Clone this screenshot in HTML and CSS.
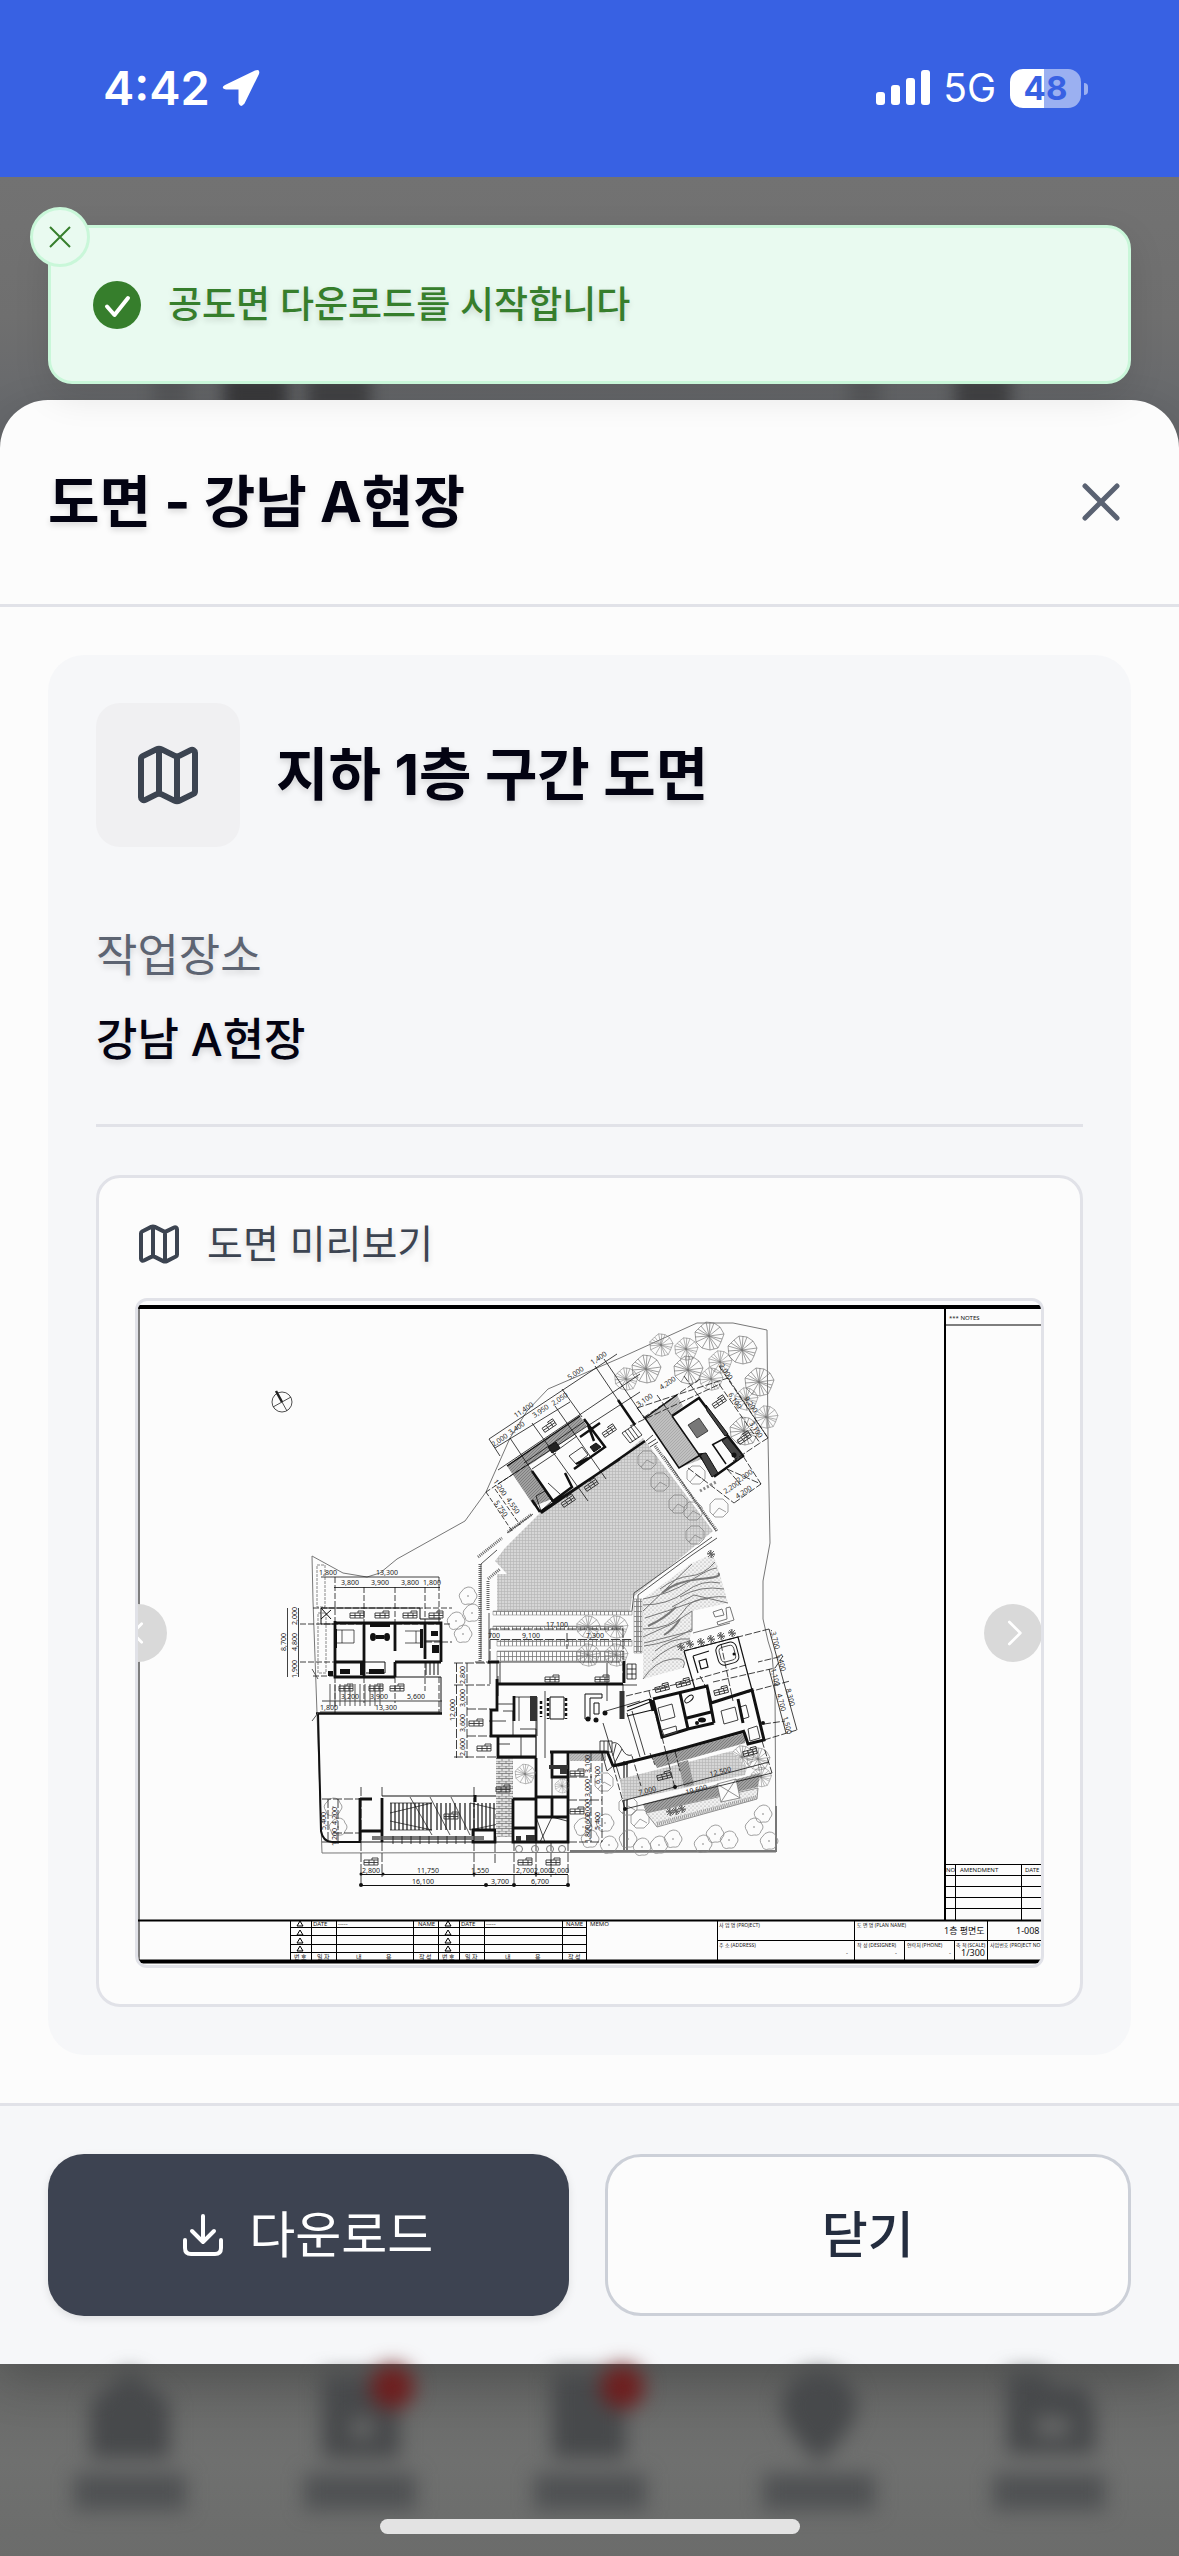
FILE: index.html
```html
<!DOCTYPE html>
<html lang="ko">
<head>
<meta charset="utf-8">
<meta name="viewport" content="width=device-width, initial-scale=1">
<title>도면 - 강남 A현장</title>
<link rel="stylesheet" href="styles.css">
</head>
<body>
<header class="status">
  <div class="status-group">
    <span class="clock">4:42</span>
    <svg class="location" viewBox="0 0 38 38" aria-hidden="true"><path d="M3 16 33 1.500Q38.500-.500 37 5L22.500 34.500Q18.500 39.500 16.500 34V20.500H4Q-2 19 3 16Z" fill="#fff"/></svg>
  </div>
  <div class="status-group">
    <svg class="signal" viewBox="0 0 54 36" fill="#fff" aria-hidden="true"><rect y="22" width="9" height="13" rx="3"/><rect x="15" y="15" width="9" height="20" rx="3"/><rect x="30" y="8" width="9" height="27" rx="3"/><rect x="45" width="9" height="35" rx="3"/></svg>
    <span class="network">5G</span>
    <span class="battery">48</span>
  </div>
</header>

<main class="stage">
  <div class="page-shade" aria-hidden="true"><i class="s1"></i><i class="s2"></i><i class="s3"></i><i class="s4"></i><i class="s5"></i></div>

  <div class="toast" role="status">
    <button class="toast-close" aria-label="알림 닫기"><svg viewBox="0 0 24 24"><path d="M2 2 22 22M22 2 2 22"/></svg></button>
    <svg class="toast-icon" viewBox="0 0 48 48" aria-hidden="true"><circle cx="24" cy="24" r="24" fill="#367e2c"/><path d="M14 25.500 21.500 34 35 17" fill="none" stroke="#fff" stroke-width="4" stroke-linecap="round" stroke-linejoin="round"/></svg>
    <span>공도면 다운로드를 시작합니다</span>
  </div>

  <section class="sheet" role="dialog" aria-labelledby="sheet-title">
    <header class="sheet-head">
      <h1 id="sheet-title">도면 - 강남 A현장</h1>
      <button class="sheet-close" aria-label="닫기"><svg viewBox="0 0 60 60"><path d="M14 14 46 46M46 14 14 46"/></svg></button>
    </header>

    <div class="sheet-body">
      <article class="card">
        <div class="card-head">
          <span class="card-icon"><svg class="map" viewBox="0 0 24 24" aria-hidden="true"><path d="M14.106 5.553a2 2 0 0 0 1.788 0l3.659-1.830A1 1 0 0 1 21 4.619v12.764a1 1 0 0 1-.553.894l-4.553 2.277a2 2 0 0 1-1.788 0l-4.212-2.106a2 2 0 0 0-1.788 0l-3.659 1.830A1 1 0 0 1 3 19.381V6.618a1 1 0 0 1 .553-.894l4.553-2.277a2 2 0 0 1 1.788 0zM15 5.764v15M9 3.236v15"/></svg></span>
          <h2>지하 1층 구간 도면</h2>
        </div>
        <dl class="info">
          <dt>작업장소</dt>
          <dd>강남 A현장</dd>
        </dl>

        <section class="preview">
          <h3><svg class="map map-small" viewBox="0 0 24 24" aria-hidden="true"><path d="M14.106 5.553a2 2 0 0 0 1.788 0l3.659-1.830A1 1 0 0 1 21 4.619v12.764a1 1 0 0 1-.553.894l-4.553 2.277a2 2 0 0 1-1.788 0l-4.212-2.106a2 2 0 0 0-1.788 0l-3.659 1.830A1 1 0 0 1 3 19.381V6.618a1 1 0 0 1 .553-.894l4.553-2.277a2 2 0 0 1 1.788 0zM15 5.764v15M9 3.236v15"/></svg>도면 미리보기</h3>
          <div class="frame">
            <svg class="plan" viewBox="138 1300 903 664" role="img" aria-label="1층 평면도">
              <defs>
                <pattern id="grid" width="3" height="3" patternUnits="userSpaceOnUse"><rect width="3" height="3" fill="#d6d6d6"/><path d="M0 .5H3M.5 0V3" stroke="#b4b4b4" stroke-width=".6"/></pattern>
                <pattern id="hatch" width="3" height="3" patternUnits="userSpaceOnUse"><rect width="3" height="3" fill="#a0a0a0"/><path d="M0 3 3 0" stroke="#707070" stroke-width=".7"/></pattern>
                <pattern id="brick" width="7" height="5" patternUnits="userSpaceOnUse"><rect width="7" height="5" fill="#e2e2e2"/><path d="M0 0H7M0 2.500H7M2 0V2.500M5 2.500V5" stroke="#666" stroke-width=".7" fill="none"/></pattern>
                <pattern id="ties" width="4" height="5" patternUnits="userSpaceOnUse"><path d="M.5 0V5M0 .5H4" stroke="#777" stroke-width=".8"/></pattern>
                <pattern id="dots" width="4" height="4" patternUnits="userSpaceOnUse"><rect width="4" height="4" fill="#f1f1f1"/><circle cx="1" cy="1" r=".6" fill="#888"/><circle cx="3" cy="3" r=".5" fill="#999"/></pattern>
                <g id="tree" fill="none" stroke="#777" stroke-width=".7"><path d="M-14-4-8-10-3-14 5-13 11-9 15-2 12 6 9 12 1 14-7 12-13 6Z"/><path d="M0 0-14-4M0 0-8-10M0 0-3-14M0 0 1-14M0 0 5-13M0 0 11-9M0 0 15-2M0 0 13 3M0 0 12 6M0 0 9 12M0 0 5 13M0 0 1 14M0 0-7 12M0 0-13 6M0 0-14 1M0 0-11-7"/></g>
                <g id="bush" fill="none" stroke="#888" stroke-width=".8"><path d="M-4-9 4-9 9-4 9 4 4 9-4 9-9 4-9-4ZM-6 7 0 0 7 4"/></g>
                <g id="flower" fill="none" stroke="#888" stroke-width=".8"><path d="M0-9Q6-9 7-4 11 0 7 4 6 9 0 8-6 10-7 4-11-1-6-5-5-8 0-9Z"/><circle r=".5"/></g>
                <g id="tag" fill="none" stroke="#333" stroke-width=".9"><path d="M-7-2H7V3H-7ZM-7 .5H7M-2-2V3M3-2V3M1-2V-4H7V-2"/></g>
                <g id="shrub" stroke="#666" stroke-width="1"><path d="M-4 0H4M0-4V4M-3-3 3 3M-3 3 3-3M-4-1 4 1M-1-4 1 4"/></g>
              </defs>

              <!-- sheet border and title block -->
              <g fill="none" stroke="#000">
                <path d="M138 1306H1041" stroke-width="4"/><path d="M138 1960.500H1041" stroke-width="4"/>
                <path d="M138 1919.500H1041M945 1306V1919" stroke-width="2"/><path d="M139 1306V1960" stroke-width="1"/>
                <path d="M945 1324H1041M945 1863.500H1041M945 1874.500H1041M945 1885.500H1041M945 1896.500H1041M945 1907.500H1041M955.500 1863V1919M1021.500 1863V1919" stroke-width="1"/>
                <path d="M290.500 1919V1960M311.500 1919V1960M336.500 1919V1960M413.500 1919V1960M438.500 1919V1960M459.500 1919V1960M484.500 1919V1960M562.500 1919V1960M586.500 1919V1960M290 1926.500H586M290 1934.500H586M290 1943.500H586M290 1951.500H586M717.500 1919V1960M854.500 1919V1960M904.500 1939V1960M954.500 1939V1960M987.500 1919V1960M717 1939.500H1041" stroke-width="1"/>
                <path d="M300 1920 303 1925H297ZM300 1929 303 1934H297ZM300 1937 303 1942H297ZM300 1945 303 1950H297ZM448 1920 451 1925H445ZM448 1929 451 1934H445ZM448 1937 451 1942H445ZM448 1945 451 1950H445Z" stroke-width="1"/>
              </g>
              <g class="note">
                <text x="949" y="1319">*** NOTES</text><text x="946" y="1871">NO</text><text x="960" y="1871">AMENDMENT</text><text x="1025" y="1871">DATE</text>
                <text x="313" y="1925">DATE</text><text x="338" y="1925">-----</text><text x="418" y="1925">NAME</text><text x="461" y="1925">DATE</text><text x="486" y="1925">-----</text><text x="566" y="1925">NAME</text><text x="590" y="1925">MEMO</text>
                <text x="294" y="1958">번 호</text><text x="317" y="1958">일 자</text><text x="356" y="1958">내</text><text x="386" y="1958">용</text><text x="419" y="1958">작 성</text><text x="442" y="1958">번 호</text><text x="465" y="1958">일 자</text><text x="505" y="1958">내</text><text x="535" y="1958">용</text><text x="568" y="1958">작 성</text>
                <text x="846" y="1954">-</text><text x="895" y="1954">-</text><text x="949" y="1954">-</text>
              </g>
              <g class="note note-small">
                <text x="719" y="1926">사 업 명 (PROJECT)</text><text x="719" y="1946">주 소 (ADDRESS)</text><text x="857" y="1926">도 면 명 (PLAN NAME)</text><text x="857" y="1946">작 성 (DESIGNER)</text><text x="907" y="1946">연락처 (PHONE)</text><text x="956" y="1946">축 척 (SCALE)</text><text x="990" y="1946">사업번호 (PROJECT NO</text>
              </g>
              <g class="note note-big"><text x="944" y="1933">1층 평면도</text><text x="1016" y="1933">1-008</text><text x="961" y="1955">1/300</text></g>

              <!-- compass -->
              <g fill="none" stroke="#222" stroke-width=".8"><circle cx="282" cy="1401" r="10"/><path d="M273 1406 291 1396M277 1392 287 1410"/><path d="M282 1401 276 1390" stroke-width="2.500"/></g>

              <!-- site boundary -->
              <path d="M312 1555 343 1572 367 1576 380 1572 397 1558 465 1520 486 1491 510 1437 527 1410 548 1388 620 1357 697 1322H733L767 1329 768 1437 770 1542 763 1580V1618L768 1640 772 1653 775 1690 776 1851 322 1852 313 1600Z" fill="none" stroke="#777" stroke-width="1"/>
              <path d="M570 1850H776V1805M624 1760V1850M627 1763V1850" fill="none" stroke="#777" stroke-width="2"/>

              <!-- courtyard, paths and garden -->
              <path d="M540 1512 620 1457 643 1437 713 1530 632 1597 630 1610H497V1573L507 1573 495 1560 505 1547Z" fill="url(#grid)"/>
              <g fill="none" stroke="#666" stroke-width="3" stroke-dasharray="1 1"><path d="M480 1563V1660M488 1580V1610M478 1556 502 1537M488 1578 500 1568M508 1531 532 1513M655 1445 717 1530"/></g>
              <path d="M497 1549 481 1563V1658M489 1612V1660M507 1532 533 1513M664 1455 716 1530M717 1537 692 1554 638 1594V1650M712 1536 634 1592 632 1610" fill="none" stroke="#555" stroke-width="1"/>
              <path d="M493 1610H632V1614H493ZM493 1625H623V1629H493ZM497 1639H632V1645H497ZM497 1650H624V1660H497ZM634 1598H642V1652H634Z" fill="url(#ties)" stroke="#888" stroke-width=".6"/>
              <path d="M643 1598 690 1563 712 1553 717 1563 728 1602 692 1610V1628L683 1667 643 1678Z" fill="url(#dots)"/>
              <g fill="none" stroke="#777" stroke-width="1">
                <path d="M643 1598Q670 1593 690 1580T717 1567M643 1604Q668 1604 685 1591T720 1582M645 1617Q668 1610 690 1602T726 1596M660 1588Q676 1576 690 1575T715 1561M643 1628Q672 1628 682 1612T708 1598M644 1645Q670 1642 692 1628M655 1650Q672 1636 690 1638M643 1678Q655 1660 672 1658T683 1667M652 1660Q668 1645 690 1640M643 1610 692 1563M680 1596Q700 1584 724 1588M672 1606 694 1594 728 1602M643 1636 674 1622 692 1610V1630L644 1642"/>
                <path d="M662 1592Q676 1580 700 1578T718 1572M648 1625Q664 1618 676 1606M664 1634Q674 1628 680 1618" stroke-width="2"/>
                <path d="M713 1611 722 1608 724 1614 715 1616ZM726 1607 730 1606 734 1619 718 1624 717 1621 727 1618ZM693 1632 730 1622"/>
              </g>
              <use href="#shrub" x="711" y="1553"/><use href="#shrub" x="732" y="1632"/><use href="#shrub" x="721" y="1635"/><use href="#shrub" x="711" y="1638"/><use href="#shrub" x="701" y="1641"/><use href="#shrub" x="690" y="1643"/><use href="#shrub" x="681" y="1646"/>

              <!-- trees -->
              <use href="#tree" transform="translate(626 1378) scale(.8)"/><use href="#tree" x="646" y="1368"/><use href="#tree" transform="translate(661 1344) scale(.8)"/><use href="#tree" transform="translate(686 1348) scale(.8)"/><use href="#tree" x="709" y="1335"/><use href="#tree" x="742" y="1349"/><use href="#tree" x="688" y="1369"/><use href="#tree" transform="translate(720 1361) scale(.8)"/><use href="#tree" transform="translate(711 1378) scale(.8)"/><use href="#tree" x="759" y="1381"/><use href="#tree" transform="translate(746 1398) scale(.8)"/><use href="#tree" transform="translate(766 1416) scale(.8)"/><use href="#tree" x="744" y="1430"/>
              <use href="#tree" transform="translate(588 1626) scale(.8)"/><use href="#tree" transform="translate(616 1626) scale(.8)"/><use href="#tree" transform="translate(588 1654) scale(.8)"/><use href="#tree" transform="translate(616 1654) scale(.8)"/><use href="#tree" transform="translate(742 1756) scale(.8)"/><use href="#tree" transform="translate(758 1758) scale(.8)"/><use href="#tree" transform="translate(761 1776) scale(.7)"/>
              <use href="#bush" x="647" y="1459"/><use href="#bush" x="660" y="1481"/><use href="#bush" x="678" y="1503"/><use href="#bush" x="693" y="1510"/><use href="#bush" x="695" y="1534"/><use href="#bush" x="696" y="1474"/><use href="#bush" x="719" y="1507"/><use href="#bush" x="604" y="1781"/><use href="#bush" x="628" y="1805"/><use href="#bush" x="640" y="1818"/>
              <use href="#flower" x="468" y="1595"/><use href="#flower" x="472" y="1612"/><use href="#flower" x="456" y="1620"/><use href="#flower" x="463" y="1633"/><use href="#flower" x="763" y="1813"/><use href="#flower" x="754" y="1826"/><use href="#flower" x="769" y="1840"/><use href="#flower" x="729" y="1839"/><use href="#flower" x="715" y="1833"/><use href="#flower" x="703" y="1843"/><use href="#flower" x="673" y="1838"/><use href="#flower" x="659" y="1844"/><use href="#flower" x="642" y="1846"/><use href="#flower" x="628" y="1838"/><use href="#flower" x="609" y="1844"/><use href="#flower" x="605" y="1822"/><use href="#flower" x="590" y="1838"/><use href="#flower" x="583" y="1826"/><use href="#flower" x="333" y="1806"/><use href="#flower" x="338" y="1826"/>
              <path d="M317 1564H325V1606H317ZM318 1612H326V1672H318Z" fill="none" stroke="#888" stroke-width="1" stroke-dasharray="3 1"/>

              <!-- north-west house -->
              <path d="M507 1465 580 1415 587 1425 528 1465 552 1498 534 1505Z" fill="url(#hatch)"/>
              <g fill="none" stroke="#111">
                <path d="M507 1465 580 1415" stroke-width="1.500"/>
                <path d="M584 1418 605 1446 588 1458M540 1511 620 1458M532 1499 540 1511M532 1470 553 1500 572 1486 565 1472M588 1424 594 1440M576 1463 588 1457M580 1436 600 1422M541 1512 645 1440M618 1399 635 1424M588 1458 574 1468" stroke-width="2.500"/>
                <path d="M536 1495 545 1490 552 1500 541 1510ZM569 1455 582 1446 588 1454 576 1463ZM555 1451 577 1435M524 1462 585 1420M532 1468 556 1452M548 1482 560 1493M592 1428 600 1440M498 1469 640 1373M498 1483 640 1391M489 1438 617 1353M495 1447 570 1401M489 1438 500 1455M510 1437 552 1500M532 1422 588 1500M555 1405 606 1478M562 1388 582 1416M595 1365 618 1399M604 1358 645 1418" stroke-width=".8"/>
                <path d="M486 1491 512 1530M495 1488 520 1524M486 1491 530 1462" stroke-width=".8" stroke-dasharray="5 2"/>
                <path d="M548 1446 556 1441 560 1447 552 1452ZM590 1446 596 1442 601 1446 594 1451Z" fill="#222" stroke-width="1"/>
                <path d="M622 1432 634 1424 642 1434 630 1442ZM625 1430 633 1441M628 1428 636 1439M631 1426 639 1437M646 1440 653 1434M648 1443 656 1438M650 1446 658 1441" stroke-width=".8"/>
              </g>
              <use href="#tag" transform="translate(549 1425) rotate(-34)"/><use href="#tag" transform="translate(609 1430) rotate(-34)"/><use href="#tag" transform="translate(591 1484) rotate(-34)"/><use href="#tag" transform="translate(568 1500) rotate(-34)"/>

              <!-- north-east studio -->
              <path d="M645 1417 677 1394 683 1405 672 1415 702 1458 679 1467Z" fill="url(#hatch)" opacity=".65"/>
              <g fill="none" stroke="#111">
                <path d="M672 1415 699 1397 743 1455 715 1475 699 1453" stroke-width="2.500"/><path d="M707 1410 725 1435 728 1433 706 1404ZM727 1436 743 1455 737 1460 722 1440ZM699 1453 712 1476 718 1472 706 1452Z" fill="#444" stroke-width="1"/>
                <path d="M645 1417 677 1394M645 1417 679 1467 702 1453M672 1415 702 1458M712 1444 727 1436M713 1444 726 1463" stroke-width="1.500"/>
                <path d="M643 1417 700 1378M630 1425 720 1383M637 1407 728 1377M637 1407 645 1417M657 1394 672 1415M684 1375 700 1397M719 1365 768 1437M728 1377 768 1437 760 1442M719 1383 760 1442 733 1460M727 1468 761 1483 734 1502M688 1467 734 1502M727 1468 741 1484M743 1455 761 1483" stroke-width=".8" stroke-dasharray="7 2"/>
                <path d="M688 1424 699 1417 708 1430 697 1437Z" fill="#777" stroke-width=".7"/>
                <path d="M700 1490 716 1481" stroke-width="3" stroke-dasharray="2 2" stroke="#888"/>
              </g>
              <circle cx="734" cy="1454" r="2.500" fill="#111"/>
              <use href="#tag" transform="translate(719 1401) rotate(-34)"/><use href="#tag" transform="translate(744 1437) rotate(-34)"/>

              <!-- west house -->
              <g fill="none" stroke="#111">
                <path d="M335 1622H441V1661M335 1620V1676H395M364 1622V1676M395 1622V1650M395 1661V1676M425 1622V1658M335 1661H364M395 1661H441" stroke-width="2.800"/>
                <path d="M321 1607V1623H335M321 1607H420V1618H441M321 1607 331 1618M321 1618 331 1609M364 1661H385V1672H366M426 1661V1674M430 1661V1674M434 1661V1674M438 1661V1674M395 1676H441V1712M424 1640H441" stroke-width="1"/>
                <path d="M336 1629H354V1642H336M342 1629V1642M405 1630H421V1642H405M416 1630V1642" stroke-width=".7"/>
                <path d="M316 1712.500H442" stroke-width="2.500"/>
                <path d="M318 1712 321 1830Q323 1841 332 1841H361" stroke-width="2"/>
                <path d="M313 1607H452M300 1623H452M300 1661H335M313 1675H335M335 1576V1622M364 1586V1622M395 1586V1622M425 1586V1622M439 1576V1622M335 1676V1712M364 1676V1702M395 1676V1702M425 1661V1690M439 1676V1712M426 1641H452" stroke-width=".8" stroke-dasharray="6 2"/>
                <path d="M321 1576H439M334 1586.500H440M287.500 1607V1676M298.500 1607V1676M322 1700H442M320 1711H440" stroke-width=".8"/>
                <path d="M330 1683V1705M335 1683V1705M340 1683V1705M345 1683V1705M350 1683V1705M355 1683V1705M360 1683V1705M365 1683V1705M370 1683V1705M375 1683V1705M380 1683V1705M312 1668 318 1678M312 1720 318 1712" stroke="#555" stroke-width="1"/>
              </g>
              <g fill="#111"><ellipse cx="373" cy="1636" rx="3" ry="4"/><ellipse cx="387" cy="1636" rx="3" ry="4"/><path d="M376 1634H384V1638H376ZM334 1628H337V1647H334ZM420 1628H423V1647H420ZM340 1668H350V1673H340ZM360 1661H365V1674H360ZM369 1668H384V1673H369ZM431 1630H438V1635H431ZM432 1644H439V1652H432ZM328 1670H333V1675H328ZM370 1623H390V1626H370Z"/></g>
              <use href="#tag" x="357" y="1614"/><use href="#tag" x="382" y="1614"/><use href="#tag" x="410" y="1614"/><use href="#tag" x="436" y="1614"/><use href="#tag" x="346" y="1687"/><use href="#tag" x="376" y="1687"/><use href="#tag" x="397" y="1687"/>

              <!-- garage -->
              <g fill="none" stroke="#111">
                <path d="M360 1797V1841M382 1797V1841M360 1830H382M360 1798H372M473 1829H495V1841H473Z" stroke-width="2.800"/>
                <path d="M382 1795H496M360 1841H514" stroke-width="1"/>
                <path d="M391 1802V1829M395 1802V1829M399 1802V1829M403 1802V1829M407 1802V1829M411 1802V1829M415 1802V1829M419 1802V1829M423 1802V1829M427 1802V1829M431 1802V1829M437 1802V1829M441 1802V1829M446 1802V1829M450 1802V1829M455 1802V1829M460 1802V1829M465 1802V1829M470 1802V1829M474 1802V1829M478 1802V1829M482 1802V1829M486 1802V1829M490 1802V1829M494 1802V1829M498 1802V1829M502 1802V1829M506 1802V1829" stroke-width="1.200"/>
                <path d="M390 1802H432L390 1812M390 1820 432 1829H390M470 1802 513 1812M513 1820 470 1829M410 1796 432 1834M430 1796 450 1834M451 1796 470 1834" stroke-width=".7"/>
                <path d="M372 1837H484" stroke="#777" stroke-width="4"/><path d="M393 1835V1843M402 1835V1843M411 1835V1843M420 1835V1843M429 1835V1843M438 1835V1843M447 1835V1843M456 1835V1843M465 1835V1843" stroke-width=".8"/>
                <path d="M361 1786V1885M382 1786V1876M474 1786V1876M495 1842V1864M322 1798H360M322 1841H360M328 1798V1841M338 1798V1843M333 1832H360" stroke-width=".8" stroke-dasharray="9 2"/>
                <path d="M475 1794V1801" stroke-width="3"/>
              </g>
              <use href="#tag" x="371" y="1861"/><use href="#tag" x="451" y="1815"/><use href="#tag" x="503" y="1815"/><use href="#tag" x="525" y="1861"/><use href="#tag" x="553" y="1861"/>

              <!-- main house -->
              <path d="M496 1757H513V1836H496Z" fill="url(#brick)"/>
              <path d="M570 1752H606V1760H570Z" fill="url(#hatch)" opacity=".7"/>
              <g fill="none" stroke="#111">
                <path d="M488 1661H499M497 1678V1709H491V1735H498V1756H536M497 1683H623M536 1757V1841M513 1798V1841H568V1796H536M550 1751H607M568 1751V1796M552 1751V1776H568M552 1797V1816H567M624 1660V1682M536 1816H552M514 1827H536M513 1798H536M498 1735H536M514 1695V1720M607 1750 613 1765" stroke-width="2.800"/>
                <path d="M622 1690V1718" stroke-width="5" stroke="#333"/><path d="M490 1661V1683M497 1661V1683M498 1675V1695M498 1703H513M503 1710H513V1735M513 1696H537V1735M519 1696V1720M520 1728H536V1735M489 1720H506M536 1698V1757M521 1735V1755M536 1735V1757M513 1757H536M499 1743H510M540 1841 552 1816 567 1820M536 1816 545 1841M552 1777V1796M500 1683V1661M498 1661H620M623 1684H637M627 1663H636V1678H627ZM627 1668H636M627 1673H636M632 1663V1678M607 1662V1700M545 1690V1757" stroke-width=".8"/>
                <path d="M550 1696H564V1718H550ZM585 1693H602V1697H590V1718H585ZM594 1702H599V1713H594Z" stroke-width="1"/>
                <path d="M548 1697V1718M566 1697V1718M541 1700V1716" stroke-width="2.500" stroke-dasharray="3 2"/>
                <path d="M600 1740H612V1751H600ZM612 1742Q618 1740 622 1748T632 1754M604 1740V1751M608 1740V1751M613 1765 622 1748M616 1743 613 1755M602 1752 607 1770 613 1765M627 1712 640 1756M632 1710 645 1754M603 1722 627 1800M606 1710 640 1700" stroke-width=".8"/>
                <path d="M456.500 1662V1757M467 1662V1757M454 1662H490M454 1684H490M467 1708H490M467 1735H490M454 1756H496M490 1628V1660M623 1628V1690M514 1841V1885M536 1841V1876M551 1841V1876M568 1841V1885M475 1661H490M591 1751V1841M602 1751V1841M568 1776H592M568 1799H602M568 1841H602M490 1628H623M490 1638.500H632M567 1632V1648" stroke-width=".8" stroke-dasharray="9 2"/>
                <path d="M361 1873.500H568M361 1884.500H568" stroke-width="1"/>
              </g>
              <path d="M530 1695H537V1720H530ZM549 1764H568V1768H549ZM560 1767H567V1773H560ZM516 1835H521V1840H516ZM526 1834H535V1840H526Z" fill="#333"/>
              <g fill="#111"><circle cx="588" cy="1718" r="2.500"/><circle cx="596" cy="1719" r="2.500"/><circle cx="605" cy="1712" r="2.500"/><circle cx="361" cy="1884" r="2"/><circle cx="486" cy="1884" r="2"/><circle cx="514" cy="1884" r="2"/><circle cx="568" cy="1884" r="2"/><circle cx="361" cy="1873" r="1.500"/><circle cx="383" cy="1873" r="1.500"/><circle cx="474" cy="1873" r="1.500"/><circle cx="536" cy="1873" r="1.500"/></g>
              <use href="#tree" transform="translate(525 1773) scale(.7)"/><use href="#tree" transform="translate(562 1785) scale(.5)"/>
              <circle cx="519" cy="1848" r="3.500" fill="none" stroke="#777"/><circle cx="535" cy="1848" r="3.500" fill="none" stroke="#777"/><circle cx="550" cy="1848" r="3.500" fill="none" stroke="#777"/><circle cx="562" cy="1848" r="3.500" fill="none" stroke="#777"/>
              <use href="#tag" x="552" y="1678"/><use href="#tag" x="602" y="1678"/><use href="#tag" x="476" y="1722"/><use href="#tag" x="484" y="1747"/><use href="#tag" x="503" y="1788"/><use href="#tag" x="577" y="1772"/><use href="#tag" x="577" y="1810"/>

              <!-- east wing -->
              <path d="M620 1778 732 1750 747 1767 745 1774 623 1800Z" fill="url(#grid)"/>
              <path d="M652 1757 745 1732V1742L657 1767Z" fill="url(#hatch)"/>
              <path d="M643 1803 722 1782 760 1772 758 1786 646 1812Z" fill="url(#hatch)"/><path d="M678 1762 688 1759 694 1784 684 1786Z" fill="url(#hatch)"/>
              <path d="M646 1812 758 1787 757 1798 657 1826Z" fill="url(#dots)" stroke="#777" stroke-width=".8"/><path d="M657 1823 757 1796" stroke="#999" stroke-width="4" stroke-dasharray="1 1"/>
              <path d="M717 1783 736 1778 740 1797 721 1801ZM717 1783 740 1797M736 1778 721 1801" fill="#fcfcfc" stroke="#777" stroke-width=".8"/>
              <use href="#shrub" x="670" y="1811"/><use href="#shrub" x="676" y="1810"/><use href="#shrub" x="682" y="1808"/>
              <g fill="none" stroke="#111">
                <path d="M653 1699 662 1736 688 1728M653 1698 707 1685 711 1702 752 1689 764 1739 748 1743 744 1731M680 1692 688 1728 714 1722M708 1690 714 1722M738 1698 743 1722M687 1717 711 1711M613 1765 677 1749 745 1730M650 1698 653 1710" stroke-width="3"/>
                <path d="M684 1650 738 1636 752 1689M684 1650 695 1688M627 1710 653 1700M627 1706 650 1698M627 1715 652 1709M693 1655 709 1650M693 1655 698 1672M699 1660 706 1658 708 1666 701 1668ZM618 1765 628 1763" stroke-width="1.200"/>
                <rect x="717" y="1642" width="21" height="21" rx="6" transform="rotate(-15 728 1653)" stroke-width="1"/><rect x="720" y="1645" width="15" height="15" rx="4" transform="rotate(-15 728 1653)" stroke-width=".7"/>
                <path d="M658 1707 672 1703 675 1716 661 1720ZM721 1710 735 1706 738 1719 724 1723ZM740 1706 746 1704 749 1716 743 1718Z" stroke-width=".8"/>
                <path d="M662 1729 676 1725 677 1731 664 1735ZM748 1728 757 1725 760 1737 750 1740Z" stroke-width="1" stroke="#444"/>
                <path d="M626 1695 690 1680 746 1664M684 1650 769 1628 772 1630M713 1681 775 1667 783 1655 758 1661M730 1696 790 1680M764 1739 797 1729M764 1723 785 1720M649 1690 660 1730M662 1736 675 1787M721 1643 733 1700M700 1675 708 1690M632 1755 641 1785M613 1765 625 1808M762 1740 772 1772M675 1750 680 1770M650 1752 655 1764" stroke-width=".8" stroke-dasharray="7 2"/>
                <path d="M769 1628 797 1729M769 1668 786 1732M625 1808 772 1772M622 1800 769 1761" stroke-width=".8"/>
              </g>
              <g fill="#111"><ellipse cx="689" cy="1698" rx="5" ry="2.500" transform="rotate(-40 689 1698)" fill="none" stroke="#111"/><ellipse cx="702" cy="1719" rx="4" ry="2.500"/><circle cx="697" cy="1722" r="2"/><circle cx="734" cy="1653" r="1.500"/><circle cx="763" cy="1722" r="2"/><circle cx="625" cy="1808" r="2"/><circle cx="675" cy="1786" r="2"/></g>
              <use href="#tag" transform="translate(662 1687) rotate(-14)"/><use href="#tag" transform="translate(683 1682) rotate(-14)"/><use href="#tag" transform="translate(721 1690) rotate(-14)"/><use href="#tag" transform="translate(750 1751) rotate(-14)"/><use href="#tag" transform="translate(664 1775) rotate(-14)"/>

              <!-- dimensions -->
              <g class="dim">
                <text x="387" y="1574">13,300</text><text x="328" y="1574">1,800</text><text x="350" y="1584">3,800</text><text x="380" y="1584">3,900</text><text x="410" y="1584">3,800</text><text x="432" y="1584">1,800</text>
                <text x="350" y="1698">3,200</text><text x="379" y="1698">3,900</text><text x="416" y="1698">5,600</text><text x="386" y="1709">13,300</text><text x="329" y="1709">1,800</text>
                <text transform="translate(286 1641) rotate(-90)">8,700</text><text transform="translate(297 1615) rotate(-90)">2,000</text><text transform="translate(297 1641) rotate(-90)">4,800</text><text transform="translate(297 1668) rotate(-90)">1,900</text>
                <text x="557" y="1626">17,100</text><text x="531" y="1637">9,100</text><text x="595" y="1637">7,300</text><text x="494" y="1637">700</text>
                <text transform="translate(455 1709) rotate(-90)">12,000</text><text transform="translate(465 1674) rotate(-90)">2,800</text><text transform="translate(465 1697) rotate(-90)">3,000</text><text transform="translate(465 1722) rotate(-90)">3,600</text><text transform="translate(465 1746) rotate(-90)">2,600</text>
                <text transform="translate(326 1820) rotate(-90)">5,400</text><text transform="translate(337 1815) rotate(-90)">4,200</text><text transform="translate(337 1836) rotate(-90)">1,200</text>
                <text transform="translate(590 1763) rotate(-90)">3,100</text><text transform="translate(590 1787) rotate(-90)">3,000</text><text transform="translate(590 1807) rotate(-90)">2,000</text><text transform="translate(590 1820) rotate(-90)">1,600</text><text transform="translate(590 1833) rotate(-90)">1,800</text><text transform="translate(600 1774) rotate(-90)">6,100</text><text transform="translate(600 1820) rotate(-90)">5,400</text>
                <text x="371" y="1872">2,800</text><text x="428" y="1872">11,750</text><text x="480" y="1872">1,550</text><text x="525" y="1872">2,700</text><text x="543" y="1872">2,000</text><text x="560" y="1872">2,000</text><text x="423" y="1883">16,100</text><text x="500" y="1883">3,700</text><text x="540" y="1883">6,700</text>
                <text transform="translate(525 1411) rotate(-34)">11,400</text><text transform="translate(577 1374) rotate(-34)">5,000</text><text transform="translate(600 1359) rotate(-34)">1,400</text><text transform="translate(501 1441) rotate(-34)">2,000</text><text transform="translate(518 1429) rotate(-34)">3,400</text><text transform="translate(542 1412) rotate(-34)">3,950</text><text transform="translate(561 1400) rotate(-34)">2,050</text><text transform="translate(498 1488) rotate(56)">1,200</text><text transform="translate(511 1506) rotate(56)">4,550</text><text transform="translate(499 1509) rotate(56)">5,750</text>
                <text transform="translate(646 1401) rotate(-34)">3,100</text><text transform="translate(669 1384) rotate(-34)">4,200</text><text transform="translate(724 1372) rotate(56)">2,000</text><text transform="translate(733 1401) rotate(56)">6,100</text><text transform="translate(749 1405) rotate(56)">9,200</text><text transform="translate(754 1430) rotate(56)">3,100</text><text transform="translate(733 1488) rotate(-34)">2,200</text><text transform="translate(746 1477) rotate(-34)">2,000</text><text transform="translate(745 1493) rotate(-34)">4,200</text>
                <text transform="translate(773 1640) rotate(75)">3,700</text><text transform="translate(779 1662) rotate(75)">1,400</text><text transform="translate(773 1677) rotate(75)">1,100</text><text transform="translate(779 1702) rotate(75)">4,700</text><text transform="translate(788 1697) rotate(75)">8,300</text><text transform="translate(785 1725) rotate(75)">1,500</text>
                <text transform="translate(721 1773) rotate(-14)">12,500</text><text transform="translate(697 1791) rotate(-14)">19,600</text><text transform="translate(648 1792) rotate(-14)">7,000</text>
              </g>
            </svg>
            <button class="arrow arrow-prev" aria-label="이전"><svg viewBox="0 0 24 24"><path d="M14 7 9 12 14 17"/></svg></button>
            <button class="arrow arrow-next" aria-label="다음"><svg viewBox="0 0 24 24"><path d="M10 6 16 12 10 18"/></svg></button>
          </div>
        </section>
      </article>
    </div>

    <footer class="sheet-foot">
      <button class="btn btn-primary"><svg viewBox="0 0 40 42" aria-hidden="true"><path d="M20 2V28M9 17 20 28 31 17M2 26V34Q2 40 8 40H32Q38 40 38 34V26"/></svg>다운로드</button>
      <button class="btn btn-outline">닫기</button>
    </footer>
  </section>

  <nav class="tabs" aria-hidden="true">
    <span class="tab"><svg viewBox="0 0 80 86"><path d="M40 0 78 30V84H2V30Z"/></svg><i></i></span>
    <span class="tab"><svg viewBox="0 0 80 86"><path d="M4 4H60V26H78V84H4ZM32 46V64H52V46Z"/><circle cx="71" cy="16" r="21"/></svg><i></i></span>
    <span class="tab"><svg viewBox="0 0 80 86"><path d="M4 2H52L74 26V84H4Z"/><circle cx="71" cy="16" r="21"/></svg><i></i></span>
    <span class="tab"><svg viewBox="0 0 80 86"><path d="M40 0Q76 4 76 38 70 62 40 88 10 62 4 38 4 4 40 0Z"/></svg><i></i></span>
    <span class="tab"><svg viewBox="0 0 80 86"><path d="M0 2H34L46 14H74L84 36V80H0ZM28 44V62H60V46Z"/></svg><i></i></span>
  </nav>
  <span class="home-bar" aria-hidden="true"></span>
</main>
</body>
</html>
```
FILE: styles.css
```css
* { box-sizing: border-box; }

body {
  margin: 0;
  min-height: 100vh;
  display: flex;
  flex-direction: column;
  background: #707070;
  color: #030312;
  font-family: Inter, "Noto Sans CJK KR", sans-serif;
}

h1, h2, h3, dl, dd { margin: 0; }
h1, h2, h3, .toast, .info { text-shadow: 0 3px 6px rgba(0, 0, 0, .15); }

button {
  margin: 0;
  padding: 0;
  border: 0;
  background: none;
  color: inherit;
  font: inherit;
}

/* status bar */
.status {
  display: flex;
  justify-content: space-between;
  padding: 58px 98px 59px 103px;
  background: #3861e3;
  color: #fff;
}
.status-group { display: flex; align-items: center; height: 60px; }
.clock { font-size: 47px; font-weight: 600; line-height: 60px; }
.location { width: 38px; height: 38px; margin-left: 12px; }
.signal { width: 54px; height: 36px; }
.network { margin: 0 14px 0 13px; font-size: 39px; line-height: 60px; }
.battery {
  position: relative;
  width: 71px;
  height: 39px;
  border-radius: 13px;
  background: linear-gradient(90deg, #fff 48%, #9bb0f1 48%);
  color: #3861e3;
  font-size: 33px;
  font-weight: 700;
  line-height: 39px;
  text-align: center;
}
.battery::after {
  content: "";
  position: absolute;
  left: 74px;
  top: 14px;
  width: 4px;
  height: 12px;
  border-radius: 0 6px 6px 0;
  background: #9bb0f1;
}

/* dimmed page with the sheet over it */
.stage {
  position: relative;
  flex: 1;
  display: flex;
  flex-direction: column;
  padding-top: 48px;
  overflow: hidden;
  background: linear-gradient(#727272 0, #6f6f6f 140px, #67696c 230px, #707070 100%);
}
.page-shade i {
  position: absolute;
  top: 198px;
  height: 40px;
  background: #3c3c3e;
  filter: blur(8px);
}
.page-shade .s1 { left: 13%; width: 36px; opacity: .3; }
.page-shade .s2 { left: 19%; width: 64px; }
.page-shade .s3 { left: 26%; width: 64px; opacity: .8; }
.page-shade .s4 { left: 72%; width: 32px; opacity: .3; }
.page-shade .s5 { left: 81%; width: 56px; opacity: .8; }

.toast {
  position: relative;
  z-index: 2;
  display: flex;
  align-items: center;
  gap: 27px;
  margin: 0 48px 16px;
  padding: 48px 42px;
  border: 3px solid #c9f7d9;
  border-radius: 24px;
  background: #e9faf0;
  box-shadow: 0 12px 36px rgba(0, 0, 0, .1);
  color: #367e2c;
  font-size: 37px;
  font-weight: 500;
  line-height: 57px;
}
.toast-icon { width: 48px; height: 48px; }
.toast-close {
  position: absolute;
  left: -21px;
  top: -21px;
  width: 60px;
  height: 60px;
  display: grid;
  place-items: center;
  border: 3px solid #c9f7d9;
  border-radius: 50%;
  background: #e9faf0;
}
.toast-close svg { width: 24px; height: 24px; fill: none; stroke: #367e2c; stroke-width: 2; }

.sheet {
  position: relative;
  border-radius: 48px 48px 0 0;
  background: #fcfcfc;
  box-shadow: 0 18px 48px rgba(0, 0, 0, .2);
}
.sheet-head {
  display: flex;
  align-items: center;
  justify-content: space-between;
  padding: 60px 48px;
  border-bottom: 3px solid #e1e2e8;
}
h1 { font-size: 56px; font-weight: 700; line-height: 84px; }
.sheet-close svg { display: block; width: 60px; height: 60px; fill: none; stroke: #5a6272; stroke-width: 5; stroke-linecap: round; }

.sheet-body { padding: 48px; }
.card { padding: 48px; border-radius: 36px; background: #f6f7f9; }
.card-head { display: flex; align-items: center; gap: 36px; }
.card-icon {
  width: 144px;
  height: 144px;
  display: grid;
  place-items: center;
  border-radius: 24px;
  background: #f0f0f2;
}
.map { width: 72px; height: 72px; fill: none; stroke: #3c4451; stroke-width: 2; stroke-linecap: round; stroke-linejoin: round; }
.map-small { width: 48px; height: 48px; }
h2 { font-size: 57px; font-weight: 700; line-height: 84px; }

.info { padding: 73px 0 48px; border-bottom: 3px solid #e1e2e8; font-size: 45px; line-height: 72px; }
.info dt { color: #5d6472; }
.info dd { margin-top: 12px; font-weight: 500; }

.preview {
  margin-top: 48px;
  padding: 36px;
  border: 3px solid #e1e2e8;
  border-radius: 24px;
  background: #fcfcfc;
}
h3 {
  display: flex;
  align-items: center;
  gap: 24px;
  margin-bottom: 24px;
  color: #3c4451;
  font-size: 39px;
  font-weight: 400;
  line-height: 60px;
}
.frame {
  position: relative;
  overflow: hidden;
  border: 3px solid #e1e2e8;
  border-radius: 12px;
}
.plan { display: block; width: 100%; height: auto; }
.note { fill: #111; font: 6px "Noto Sans", "Noto Sans CJK KR", sans-serif; }
.note-small { font-size: 5px; }
.note-big { font-size: 9px; }
.dim { fill: #222; font: 7px "Noto Sans", sans-serif; text-anchor: middle; }

.arrow {
  position: absolute;
  top: 50%;
  width: 58px;
  height: 58px;
  margin-top: -29px;
  display: grid;
  place-items: center;
  border-radius: 50%;
  background: #d9d9d9;
}
.arrow svg { width: 44px; height: 44px; fill: none; stroke: #fff; stroke-width: 1.5; stroke-linecap: round; stroke-linejoin: round; }
.arrow-prev { left: -29px; }
.arrow-next { right: -1px; }

.sheet-foot {
  display: flex;
  gap: 36px;
  padding: 48px;
  border-top: 3px solid #e1e2e8;
  background: #f6f7f9;
}
.btn {
  flex: 1;
  box-sizing: content-box;
  display: flex;
  align-items: center;
  justify-content: center;
  gap: 26px;
  border-radius: 36px;
  font-size: 50px;
  line-height: 72px;
}
.btn-primary { padding: 45px 0; background: #3d4351; box-shadow: 0 3px 9px rgba(0, 0, 0, .1); color: #fff; }
.btn-primary svg { width: 40px; height: 42px; fill: none; stroke: #fff; stroke-width: 4; stroke-linecap: round; stroke-linejoin: round; }
.btn-outline { padding: 42px 0; border: 3px solid #ccd0d8; background: #fcfcfc; color: #242d3f; font-weight: 500; }

/* tab bar, out of focus behind the overlay */
.tabs {
  flex: 1;
  display: flex;
  justify-content: space-between;
  padding: 6px 72px 48px;
  background: linear-gradient(#666766, #6f706f 50%, #6b6c6b);
}
.tab { display: flex; flex-direction: column; align-items: center; gap: 14px; width: 116px; filter: blur(10px); }
.tab svg { width: 84px; height: 90px; overflow: visible; fill: #47494b; fill-rule: evenodd; }
.tab circle { fill: #6e1e1e; }
.tab i { width: 112px; height: 36px; background: #4f5153; }

.home-bar {
  position: absolute;
  left: 50%;
  bottom: 24px;
  width: 420px;
  height: 15px;
  margin-left: -210px;
  border-radius: 8px;
  background: #e3e3e3;
}
```
